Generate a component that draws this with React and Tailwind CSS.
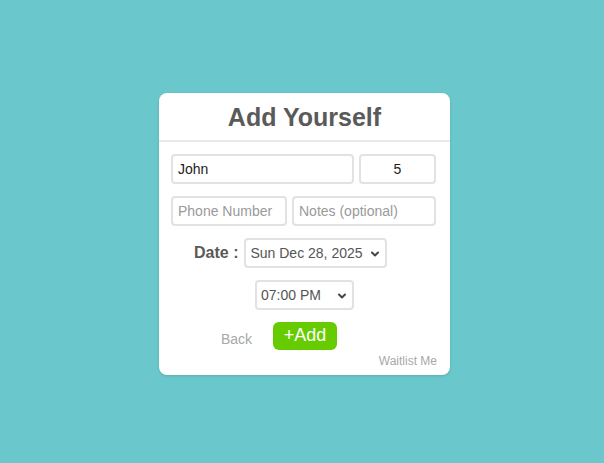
import { ChevronDown } from 'lucide-react'

const inputCls =
  'h-[30px] rounded-[4px] border-2 border-[#e2e2e2] bg-white px-[5px] text-[14px] text-[#222] placeholder:text-[#9a9a9a] outline-none'

function FakeSelect({ value, width }) {
  return (
    <div
      className={`relative flex h-[30px] items-center rounded-[4px] border-2 border-[#e2e2e2] bg-white pl-[4px] text-[14px] text-[#555] ${width}`}
    >
      <span>{value}</span>
      <ChevronDown className="absolute right-[4px] top-[8px] h-[12px] w-[12px] text-[#444]" strokeWidth={4} />
    </div>
  )
}

export default function App() {
  return (
    <div
      className="flex min-h-screen items-center justify-center bg-[#6ac8cc] pl-[5px] pt-[5px]"
      style={{ fontFamily: '"Liberation Sans", Arial, sans-serif' }}
    >
      <div className="flex h-[282px] w-[291px] flex-col rounded-[8px] bg-white shadow-[0_1px_3px_rgba(0,0,0,0.15)]">
        {/* Header */}
        <div className="flex h-[49px] items-center justify-center border-b-2 border-[#e8e8e8]">
          <h1 className="pt-[2px] text-[25px] font-bold text-[#5a5a5a]">Add Yourself</h1>
        </div>

        {/* Form */}
        <div className="flex flex-col pl-[12px] pt-[12px]">
          <div className="flex gap-[5px]">
            <input className={`${inputCls} w-[183px]`} defaultValue="John" />
            <input className={`${inputCls} w-[77px] text-center`} defaultValue="5" />
          </div>
          <div className="mt-[12px] flex gap-[5px]">
            <input className={`${inputCls} w-[116px]`} placeholder="Phone Number" />
            <input className={`${inputCls} w-[144px]`} placeholder="Notes (optional)" />
          </div>

          <div className="mt-[12px] flex items-center gap-[6px] pl-[23px]">
            <span className="text-[16px] font-bold text-[#5a5a5a]">Date :</span>
            <FakeSelect value="Sun Dec 28, 2025" width="w-[143px]" />
          </div>

          <div className="mt-[12px] flex pl-[84px]">
            <FakeSelect value="07:00 PM" width="w-[99px]" />
          </div>

          <div className="mt-[11px] flex items-center pl-[50px]">
            <button className="mt-[8px] text-[14px] text-[#a8a8a8]">Back</button>
            <button className="ml-[21px] h-[28px] w-[64px] rounded-[6px] bg-[#66cc00] pb-[2px] text-[18px] text-white">
              +Add
            </button>
          </div>
        </div>

        <div className="flex justify-end pr-[13px] pt-[2px]">
          <span className="text-[12px] text-[#a8a8a8]">Waitlist Me</span>
        </div>
      </div>
    </div>
  )
}
